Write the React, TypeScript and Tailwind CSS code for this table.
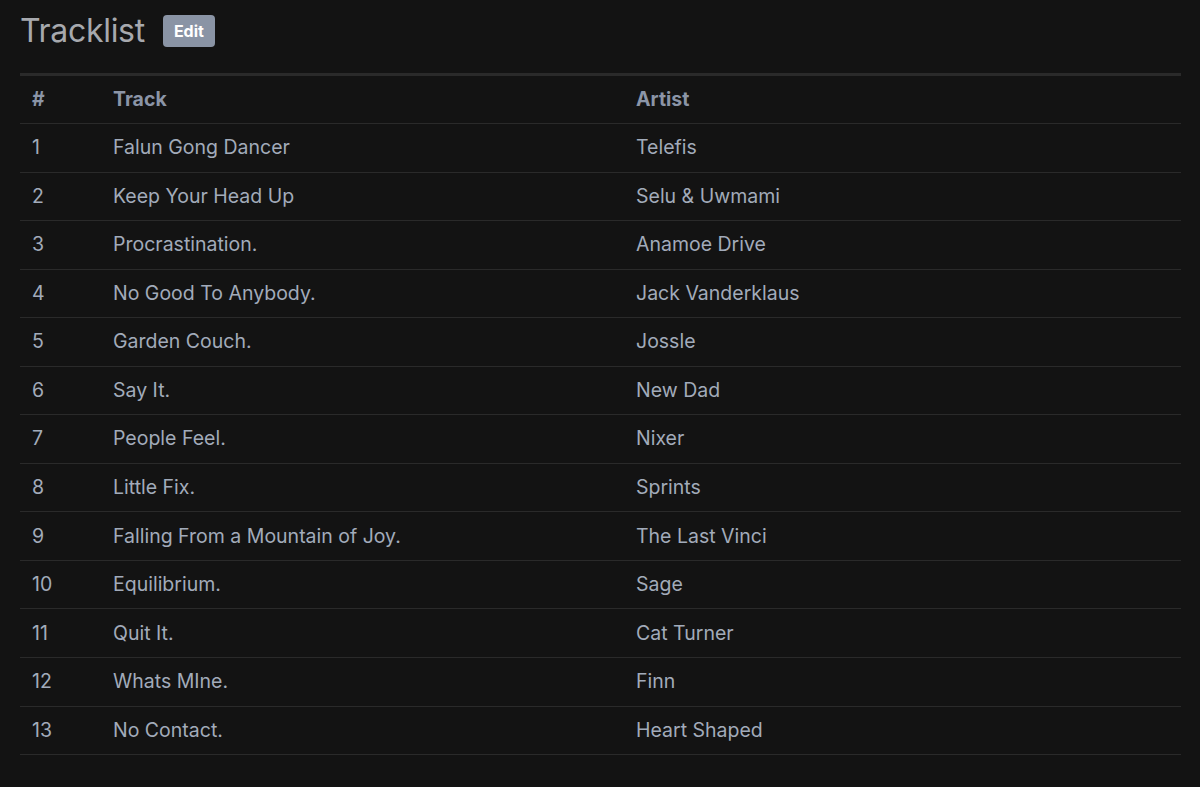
const tracks = [
  { n: 1, title: 'Falun Gong Dancer', artist: 'Telefis' },
  { n: 2, title: 'Keep Your Head Up', artist: 'Selu & Uwmami' },
  { n: 3, title: 'Procrastination.', artist: 'Anamoe Drive' },
  { n: 4, title: 'No Good To Anybody.', artist: 'Jack Vanderklaus' },
  { n: 5, title: 'Garden Couch.', artist: 'Jossle' },
  { n: 6, title: 'Say It.', artist: 'New Dad' },
  { n: 7, title: 'People Feel.', artist: 'Nixer' },
  { n: 8, title: 'Little Fix.', artist: 'Sprints' },
  { n: 9, title: 'Falling From a Mountain of Joy.', artist: 'The Last Vinci' },
  { n: 10, title: 'Equilibrium.', artist: 'Sage' },
  { n: 11, title: 'Quit It.', artist: 'Cat Turner' },
  { n: 12, title: 'Whats MIne.', artist: 'Finn' },
  { n: 13, title: 'No Contact.', artist: 'Heart Shaped' },
];

export default function App() {
  return (
    <div className="min-h-[787px] bg-[#131313] px-5 pt-[11px] font-['Inter',sans-serif]">
      {/* Header */}
      <div className="flex items-center gap-[18px]">
        <h1 className="text-[32px] leading-[40px] text-[#a7a9ae] tracking-[-0.3px]">Tracklist</h1>
        <button className="h-8 w-[52px] rounded-[4px] bg-[#8a94a5] text-[16px] font-bold text-white">
          Edit
        </button>
      </div>

      {/* Table */}
      <table className="mt-[22px] w-[1161px] border-t-[3px] border-[#2a2a2a] text-left">
        <thead>
          <tr className="h-[49px] border-b border-[#2a2a2a] text-[19.5px] font-bold text-[#8b95a7]">
            <th className="w-[81px] pl-3 font-bold">#</th>
            <th className="w-[523px] pl-3 font-bold">Track</th>
            <th className="pl-3 font-bold">Artist</th>
          </tr>
        </thead>
        <tbody>
          {tracks.map((t) => (
            <tr key={t.n} className="h-[48.55px] border-b border-[#2a2a2a] text-[19.5px] text-[#a2abba]">
              <td className="pl-3">{t.n}</td>
              <td className="pl-3">{t.title}</td>
              <td className="pl-3">{t.artist}</td>
            </tr>
          ))}
        </tbody>
      </table>
    </div>
  );
}
